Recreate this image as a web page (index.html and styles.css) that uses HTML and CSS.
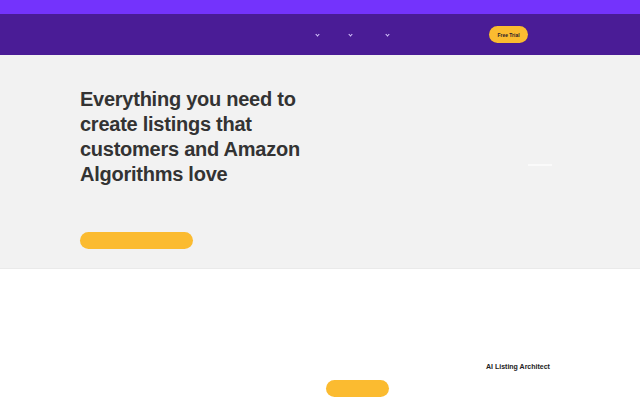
FILE: index.html
```html
<!DOCTYPE html>
<html>
<head>
<meta charset="utf-8">
<link rel="stylesheet" href="styles.css">
</head>
<body>
<div class="topbar"></div>
<header class="nav">
  <div class="nav-inner">
    <div class="menu">
      <span class="item"><span class="chev"></span></span>
      <span class="item"><span class="chev"></span></span>
      <span class="item"><span class="chev"></span></span>
    </div>
    <a class="trial">Free Trial</a>
  </div>
</header>
<section class="hero">
  <div class="hero-inner">
    <div class="hero-text">
      <h1>Everything you need to create listings that customers and Amazon Algorithms love</h1>
      <span class="cta"></span>
    </div>
    <div class="hero-media"><span class="line"></span></div>
  </div>
</section>
<section class="features">
  <div class="feat-inner">
    <div class="feat-left"><span class="cta small"></span></div>
    <div class="feat-right"><h3>AI Listing Architect</h3></div>
  </div>
</section>
</body>
</html>
```
FILE: styles.css
```css
* { box-sizing: border-box; }
body { margin: 0; font-family: "Liberation Sans", Arial, sans-serif; background: #fff; width: 640px; height: 400px; overflow: hidden; }
.topbar { height: 14px; background: #7433fc; }
.nav { height: 41px; background: #4a1c96; }
.nav-inner { height: 100%; display: flex; align-items: center; padding-left: 313px; }
.menu { display: flex; align-items: center; }
.item { width: 8px; height: 8px; display: flex; align-items: center; justify-content: center; }
.item + .item { margin-left: 25px; }
.item:nth-child(3) { margin-left: 29px; }
.chev { width: 3px; height: 3px; border-right: 1px solid #d8c8ff; border-bottom: 1px solid #d8c8ff; transform: rotate(45deg); margin-top: -1px; }
.trial { margin-left: 98px; width: 39px; height: 17px; border-radius: 9px; background: #fbbb30; color: #2a1a2a; font-size: 5px; font-weight: bold; display: flex; align-items: center; justify-content: center; box-shadow: 0 0 1px rgba(0,0,0,.2); }
.hero { height: 214px; background: #f2f2f2; border-bottom: 1px solid #eaeaea; }
.hero-inner { display: flex; padding: 32px 0 0 80px; }
.hero-text { width: 240px; }
h1 { margin: 0; font-size: 20px; line-height: 25px; font-weight: bold; color: #333; letter-spacing: -0.25px; }
.cta { display: block; margin-top: 45px; width: 113px; height: 17px; border-radius: 9px; background: #fbbb30; }
.hero-media { margin-left: 208px; padding-top: 77px; }
.line { display: block; width: 24px; height: 2px; background: #fafafa; }
.features { height: 131px; }
.feat-inner { display: flex; padding-left: 326px; padding-top: 94px; }
.feat-left { padding-top: 17px; }
.cta.small { margin-top: 0; width: 63px; height: 17px; }
.feat-right { margin-left: 97px; }
h3 { margin: 0; font-size: 7px; font-weight: bold; color: #222; }
```
